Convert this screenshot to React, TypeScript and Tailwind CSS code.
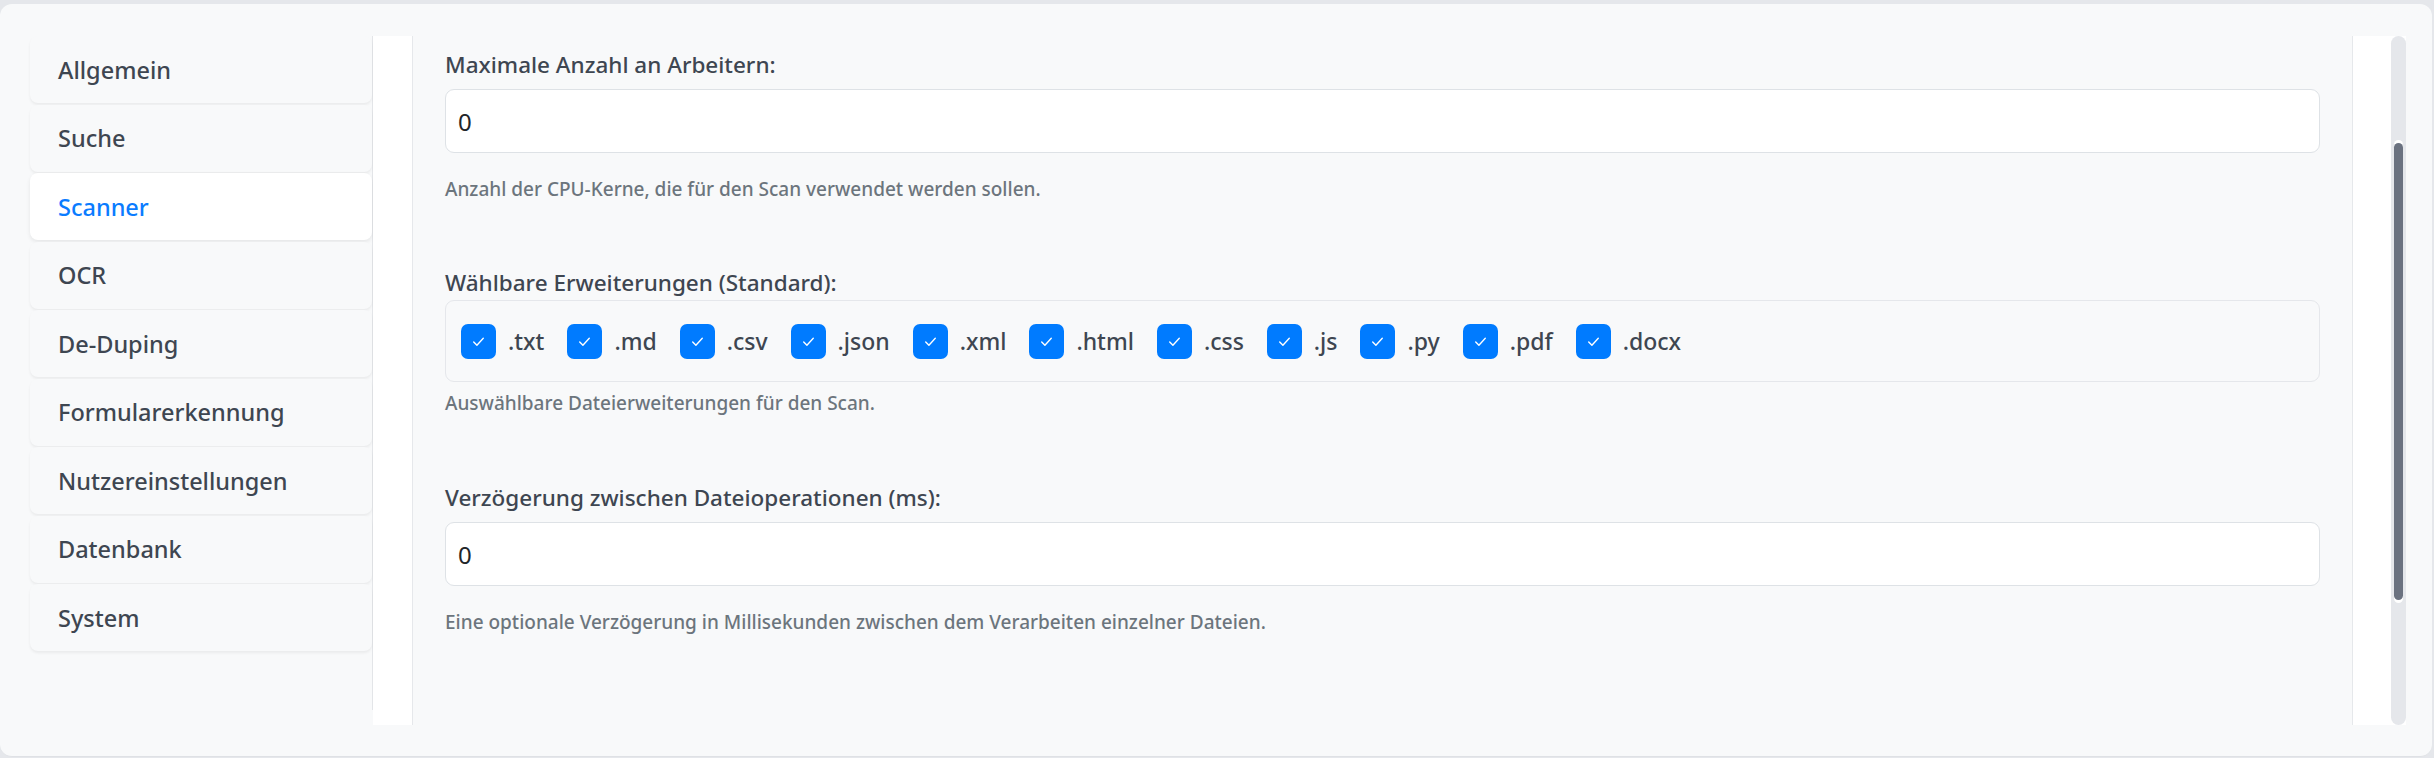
import React from 'react';

const navItems = [
  'Allgemein',
  'Suche',
  'Scanner',
  'OCR',
  'De-Duping',
  'Formularerkennung',
  'Nutzereinstellungen',
  'Datenbank',
  'System',
];

const extensions = ['.txt', '.md', '.csv', '.json', '.xml', '.html', '.css', '.js', '.py', '.pdf', '.docx'];

const CheckIcon: React.FC = () => (
  <svg viewBox="0 0 16 16" className="h-[17px] w-[17px]" fill="none">
    <path d="M3.5 8.5l3 3 6-6.5" stroke="white" strokeWidth="1.3" strokeLinecap="round" strokeLinejoin="round" />
  </svg>
);

const Field: React.FC<{ label: string; help: string }> = ({ label, help }) => (
  <div>
    <label className="block text-[22.5px] leading-[33px] font-medium text-[#3e4651]">{label}</label>
    <input
      readOnly
      value="0"
      className="mt-2 block h-[64px] w-full rounded-[9px] border border-[#dee2e6] bg-white px-[12px] text-[24px] text-[#212529] outline-none"
    />
    <p className="mt-[22px] text-[19px] leading-[28px] font-medium text-[#6c757d]">{help}</p>
  </div>
);

const App: React.FC = () => {
  return (
    <div className="h-[758px] w-full bg-[#e5e7eb] pt-[4px] pr-[2px] font-['Noto_Sans',sans-serif]">
      <div className="flex h-[753px] rounded-xl border-b border-[#dfe1e5] bg-[#f8f9fa] pl-[30px] pr-[26px] pt-[32px]">
        {/* Sidebar */}
        <nav className="flex h-[674px] w-[343px] shrink-0 flex-col gap-[1.5px] border-r border-[#e3e5e8]">
          {navItems.map((item) => {
            const active = item === 'Scanner';
            return (
              <div
                key={item}
                className={
                  active
                    ? 'flex h-[67px] items-center rounded-lg bg-white pl-[28px] pt-[2px] text-[23.5px] font-medium text-[#0a7cff] shadow-[0_2px_4px_rgba(0,0,0,0.08)]'
                    : 'flex h-[67px] items-center rounded-lg bg-[#f8f9fa] pl-[28px] pt-[2px] text-[23.5px] font-medium text-[#3e4651] shadow-[0_2px_3px_rgba(0,0,0,0.06)]'
                }
              >
                {item}
              </div>
            );
          })}
        </nav>

        {/* Content panel */}
        <div className="flex h-[689px] flex-1 bg-white pl-[39px]">
          <main className="flex-1 overflow-hidden border-x border-[#e6e8eb] bg-[#f8f9fa] px-8 pt-[12px]">
            <Field label="Maximale Anzahl an Arbeitern:" help="Anzahl der CPU-Kerne, die für den Scan verwendet werden sollen." />

            <div className="mt-[63px]">
              <label className="block text-[22.5px] leading-[33px] font-medium text-[#3e4651]">
                Wählbare Erweiterungen (Standard):
              </label>
              <div className="mt-[1px] flex h-[82px] items-center gap-x-[23px] rounded-[9px] border border-[#e5e7eb] px-[15px]">
                {extensions.map((ext) => (
                  <label key={ext} className="flex items-center gap-[12px]">
                    <span className="flex h-[35px] w-[35px] items-center justify-center rounded-[7px] bg-[#007bff]">
                      <CheckIcon />
                    </span>
                    <span className="text-[23px] font-medium text-[#3e4651]">{ext}</span>
                  </label>
                ))}
              </div>
              <p className="mt-[7px] text-[19px] leading-[28px] font-medium text-[#6c757d]">
                Auswählbare Dateierweiterungen für den Scan.
              </p>
            </div>

            <div className="mt-[64px]">
              <Field
                label="Verzögerung zwischen Dateioperationen (ms):"
                help="Eine optionale Verzögerung in Millisekunden zwischen dem Verarbeiten einzelner Dateien."
              />
            </div>
          </main>

          {/* Scrollbar */}
          <div className="ml-[38px] flex w-[15px] flex-col rounded-full bg-[#e5e7eb] pt-[107px]">
            <div className="mx-auto h-[457px] w-[9px] rounded-full bg-[#6b7280] shadow-[0_-3px_0_#fff,0_3px_0_#fff]" />
          </div>
        </div>
      </div>
    </div>
  );
};

export default App;
